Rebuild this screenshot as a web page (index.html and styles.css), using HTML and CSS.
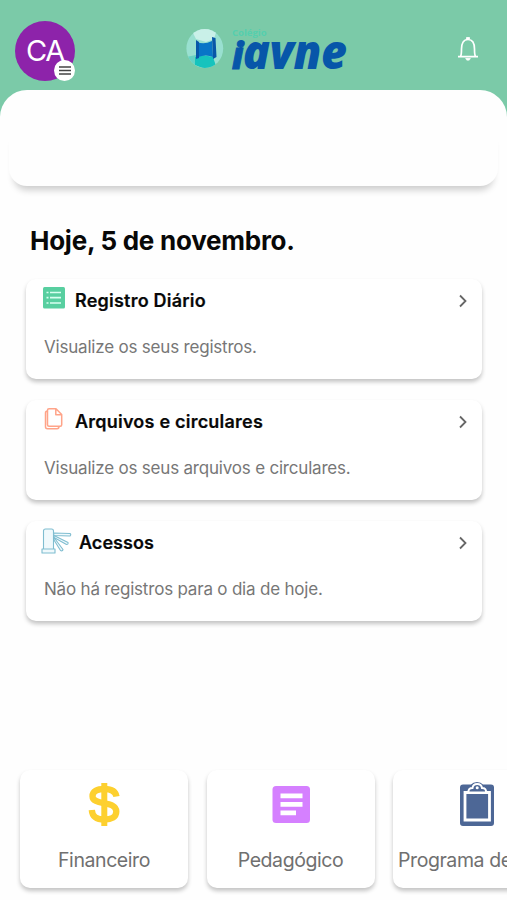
FILE: index.html
```html
<!DOCTYPE html>
<html lang="pt-BR">
<head>
<meta charset="utf-8">
<title>Iavne</title>
<link rel="stylesheet" href="styles.css">
</head>
<body>
<div class="app">
  <header class="topbar">
    <div class="avatar"><span class="initials">CA</span>
      <span class="menu-badge"><svg width="12" height="9" viewBox="0 0 12 9" stroke="#444" stroke-width="1.3"><path d="M0 1h12M0 4.5h12M0 8h12"/></svg></span>
    </div>
    <div class="brand">
      <svg class="brand-mark" width="38" height="40" viewBox="0 0 38 40">
        <defs><clipPath id="disc"><ellipse cx="18.8" cy="19.5" rx="18.4" ry="19.5"/></clipPath></defs>
        <g clip-path="url(#disc)">
          <path fill="#99e0d0" d="M0 0h38v40H0z"/>
          <path fill="#c9f0e8" d="M5 0h26l-3 10-8 3-10-3z"/>
          <path fill="#66d2c4" d="M0 28l10-2v14H0z"/>
          <path fill="#16c3bd" d="M9 28q8-3 18 0l3 9-11 3-10-4z"/>
        </g>
        <path fill="#0875c7" d="M11 13q7 3 15-1l1 16q-7-3-15 0z"/>
        <path fill="#0857a8" d="M10 11l3 2v16l-3 1zM26 8l3.500 1 1 19-3.500 2z"/>
      </svg>
      <div class="wordmark"><span class="brand-over">Colégio</span><span class="brand-name"><span class="brand-initial">i</span>avne</span></div>
    </div>
    <svg class="bell" width="22" height="26" viewBox="0 0 22 26" fill="none" stroke="#fff" stroke-width="1.7" stroke-linejoin="round">
      <path d="M1 20.6h20M3.500 20.500c1-1.500 1-3 1-7.500C4.500 7.500 6.500 3.500 11 3.500s6.500 4 6.500 9.500c0 4.500 0 6 1 7.500"/>
      <path d="M9.500 3V1.500h3V3M8.700 22.500c.6 2.300 4 2.300 4.600 0z" fill="#fff" stroke-width=".8"/>
    </svg>
  </header>
  <section class="panel"></section>
  <main class="today">
    <h1>Hoje, 5 de novembro.</h1>
    <article class="card">
      <div class="card-head">
        <svg class="icon" width="22" height="22" viewBox="0 0 22 22"><rect width="22" height="21.500" rx="1.500" fill="#58cfa0"/><path d="M3.500 5.500h2M7 5.500h11M3.500 10.700h2M7 10.700h11M3.500 16h2M7 16h11" stroke="#d8fff0" stroke-width="1.700"/></svg>
        <h2>Registro Diário</h2>
        <svg class="chevron" width="8" height="14" viewBox="0 0 8 14"><path d="M1 1.500l5.500 5.500L1 12.500"/></svg>
      </div>
      <p>Visualize os seus registros.</p>
    </article>
    <article class="card">
      <div class="card-head">
        <svg class="icon" width="22" height="22" viewBox="0 0 22 22" fill="none" stroke="#ffa489" stroke-width="1.500" stroke-linejoin="round"><path d="M6 .8h7l5.700 5.700v10.200q0 1.500-1.500 1.500H6q-1.500 0-1.500-1.500V2.300Q4.500.8 6 .8zM12.800.8v6h5.900M4.500 3Q2.500 3 2.500 5v13.800q0 2 2 2H14q2 0 2-2.500"/></svg>
        <h2>Arquivos e circulares</h2>
        <svg class="chevron" width="8" height="14" viewBox="0 0 8 14"><path d="M1 1.500l5.500 5.500L1 12.500"/></svg>
      </div>
      <p>Visualize os seus arquivos e circulares.</p>
    </article>
    <article class="card">
      <div class="card-head">
        <svg class="icon wide" width="31" height="26" viewBox="0 0 31 26" fill="#f0f9fc" stroke="#7fbdd0" stroke-width="1.100" stroke-linejoin="round"><path d="M2.500 21V3q0-2 2-2h6q2 0 2 2v18zM1 21h13v4H1z"/><path d="M12.500 5l16.500.5q1.500 1.300 0 2.500L13 7.500z"/><path d="M13 7.500l14 7q.5 2-1.500 2L13 9.500z"/><path d="M13 9.500l9 12q-.5 2-2.500 1L13 12z"/></svg>
        <h2 class="short">Acessos</h2>
        <svg class="chevron" width="8" height="14" viewBox="0 0 8 14"><path d="M1 1.500l5.500 5.500L1 12.500"/></svg>
      </div>
      <p>Não há registros para o dia de hoje.</p>
    </article>
  </main>
  <nav class="tiles">
    <div class="tile">
      <svg width="44" height="44" viewBox="0 0 44 44" fill="none" stroke="#fdd02f"><path stroke-width="6.300" d="M34.500 14.500C33.500 9 29 7 22.500 7C15 7 10.500 9.500 10.500 14.200C10.500 24 34.300 18 34.300 29.500C34.300 35 29.500 37.500 22.500 37.500C14.500 37.500 10.300 34.800 9.800 28"/><path stroke-width="6" d="M22.300 1v43"/></svg>
      <span>Financeiro</span>
    </div>
    <div class="tile">
      <svg width="44" height="44" viewBox="0 0 44 44"><rect x="3.500" y="4" width="37.500" height="37" rx="3.500" fill="#d580ff"/><path d="M11.500 13.800h22M11.500 22.300h22M11.500 30.800h15.500" stroke="#fff" stroke-width="4.700"/></svg>
      <span>Pedagógico</span>
    </div>
    <div class="tile">
      <svg width="44" height="44" viewBox="0 0 44 44"><path d="M8 2.500h8Q18 0 22 0t6 2.500h8q3 0 3 3V41q0 3-3 3H8q-3 0-3-3V5.500q0-3 3-3z" fill="#4d6796"/><path d="M10 10.500h24.500v27.500H10z" fill="#4d6796" stroke="#fff" stroke-width="2.800"/><path d="M13.500 10.500q-.5-4.500 4-4.500Q18 2 22.200 2T27 6q4.500 0 4 4.500z" fill="#4d6796" stroke="#fff" stroke-width="2"/><circle cx="22.200" cy="5.800" r="1.500" fill="#fff"/></svg>
      <span class="l-prog">Programa de</span>
    </div>
  </nav>
</div>
</body>
</html>
```
FILE: styles.css
```css
* { box-sizing: border-box; }
body { margin: 0; background: #fefefe; font-family: Inter, "Liberation Sans", sans-serif; }
h1, h2, p { margin: 0; }
svg { display: block; flex: none; }
.app { width: 507px; height: 900px; overflow: hidden; display: flex; flex-direction: column; background: linear-gradient(#7bcaa8 0 130px, #fefefe 130px); }
.topbar { height: 90px; flex: none; display: flex; justify-content: space-between; align-items: flex-start; padding: 21px 28px 0 15px; }
.avatar { position: relative; width: 60px; height: 60px; border-radius: 50%; background: #8d23aa; color: #fff; display: flex; justify-content: center; align-items: center; }
.initials { font: 29px/60px Inter, sans-serif; letter-spacing: -1.3px; }
.menu-badge { position: absolute; right: 0; bottom: 0; width: 21px; height: 21px; border-radius: 50%; background: #fff; display: flex; align-items: center; justify-content: center; }
.brand { display: flex; width: 162px; margin: 7px 12px 0 14px; }
.brand-mark { margin-top: 1px; }
.wordmark { display: flex; flex-direction: column; margin-left: 8px; }
.brand-over { font: 700 9.5px/10px "Open Sans", sans-serif; color: #55cfae; }
.brand-name { font: italic 800 48px/30px "Open Sans", sans-serif; color: #0756a9; letter-spacing: -.5px; transform: scaleX(.935); transform-origin: 0 0; white-space: nowrap; height: 30px; margin-top: -2px; }
.brand-initial { font-size: 37px; line-height: 1px; -webkit-text-stroke: 1px #0756a9; }
.bell { margin-top: 15px; }
.panel { height: 96px; flex: none; position: relative; background: #fefefe; border-radius: 27px 27px 0 0; }
.panel::after { content: ""; position: absolute; inset: 40px 9px 0; border-radius: 0 0 18px 18px; box-shadow: 0 9px 7px -5px rgba(0,0,0,.2); background: #fefefe; }
.today { padding: 38px 25px 0 26px; display: flex; flex-direction: column; gap: 21px; }
h1 { font-size: 26px; line-height: 34px; font-weight: 700; letter-spacing: -.25px; padding-left: 4px; color: #080808; }
.card { height: 100px; border-radius: 10px; background: #fff; box-shadow: 0 3px 4px rgba(0,0,0,.23); padding: 0 15px 0 17px; }
.card-head { display: flex; height: 43px; align-items: center; }
.icon { margin: -6px 10px 0 0; }
.icon.wide { margin: -4px 7px 0 -2px; }
h2 { flex: 1; font-size: 18px; line-height: 24px; font-weight: 600; letter-spacing: .22px; color: #080808; white-space: nowrap; -webkit-text-stroke: .2px #080808; }
h2.short { letter-spacing: .05px; }
.chevron { fill: none; stroke: #666; stroke-width: 1.8; }
.card p { margin-left: 1px; font-size: 17px; line-height: 24px; letter-spacing: -.2px; color: #777; padding-top: 13px; white-space: nowrap; }
.tiles { margin-top: auto; padding: 0 0 12px 20px; display: flex; gap: 18.5px; }
.tile { width: 168px; height: 118px; flex: none; border-radius: 10px; background: #fff; box-shadow: 0 3px 4px rgba(0,0,0,.23); display: flex; flex-direction: column; align-items: center; padding-top: 12px; color: #707070; font-size: 19.5px; letter-spacing: -.42px; }
.tile span { line-height: 26px; margin-top: 21px; white-space: nowrap; }
.tile .l-prog { align-self: flex-start; margin-left: 5px; }
```
